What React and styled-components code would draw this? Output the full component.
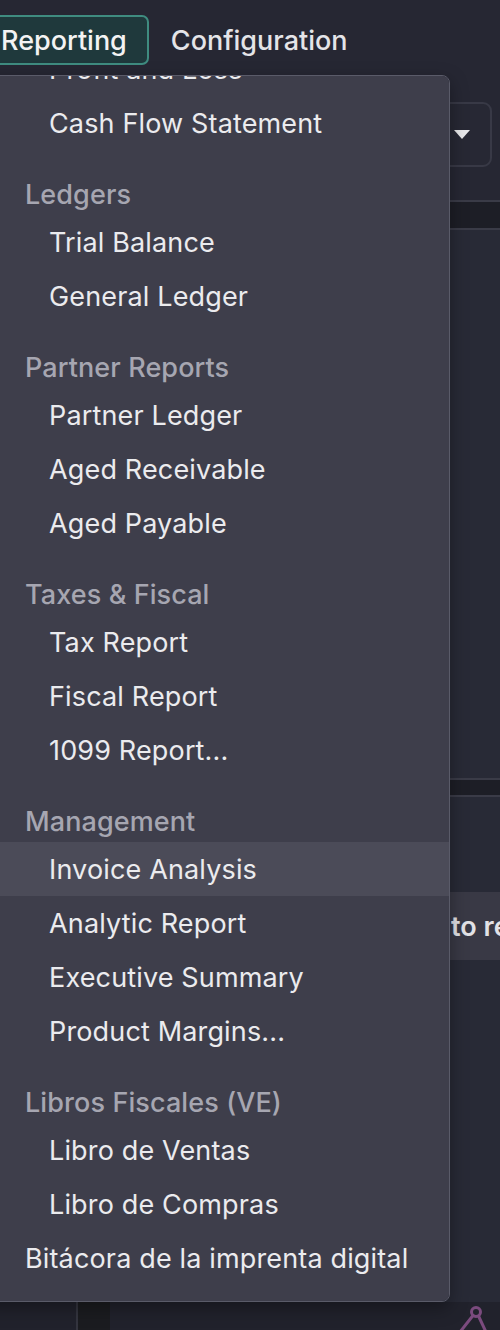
import React, { useLayoutEffect, useRef } from 'react'
import styled, { createGlobalStyle } from 'styled-components'

const GlobalStyle = createGlobalStyle`
  html, body {
    margin: 0;
    padding: 0;
    background: #262733;
    overflow: hidden;
  }
  body {
    font-family: Inter, "Noto Sans", sans-serif;
    -webkit-font-smoothing: antialiased;
  }
`

const Page = styled.div`
  position: relative;
  width: 500px;
  height: 1330px;
  overflow: hidden;
  display: flex;
  flex-direction: column;
`

const TopBar = styled.nav`
  height: 75px;
  flex-shrink: 0;
  display: flex;
  align-items: flex-start;
  gap: 0;
  padding-top: 15px;
  margin-left: -21px;
  box-sizing: border-box;
`

const NavButton = styled.button`
  height: 50px;
  padding: 0 20px;
  border-radius: 7px;
  border: 2px solid ${(p) => (p.active ? '#3f8c80' : 'transparent')};
  background: ${(p) => (p.active ? '#1f393c' : 'transparent')};
  color: ${(p) => (p.active ? '#f3f3f3' : '#e4e4e8')};
  font-family: Inter, sans-serif;
  font-size: 27px;
  font-weight: 500;
  cursor: pointer;
`

const Toolbar = styled.div`
  height: 125px;
  flex-shrink: 0;
  display: flex;
  justify-content: flex-end;
  align-items: flex-start;
  padding: 27px 8px 0 0;
  box-sizing: border-box;
`

const SelectBox = styled.div`
  width: 220px;
  height: 65px;
  border: 2px solid #383946;
  border-radius: 9px;
  background: #272834;
  box-sizing: border-box;
  display: flex;
  align-items: center;
  justify-content: flex-end;
  padding-right: 20px;
`

const Caret = styled.span`
  width: 0;
  height: 0;
  border-left: 8px solid transparent;
  border-right: 8px solid transparent;
  border-top: 9px solid #e8e8ea;
`

const Band = styled.div`
  height: ${(p) => p.h}px;
  flex-shrink: 0;
  background: #1d1e26;
  border-top: 2px solid #3a3b47;
  border-bottom: 2px solid #3a3b47;
  box-sizing: border-box;
`

const Panel = styled.div`
  height: ${(p) => p.h}px;
  flex-shrink: 0;
  background: #282a36;
  display: flex;
  flex-direction: column;
`

const NoticeRow = styled.div`
  margin-top: 95px;
  height: 68px;
  background: #393945;
  display: flex;
  align-items: center;
  padding-left: 451px;
  white-space: nowrap;
  color: #e2e2e6;
  font-size: 27px;
  font-weight: 600;
`

const Footer = styled.div`
  flex: 1;
  background: #21222c;
  display: flex;
  justify-content: space-between;
`

const Strip = styled.div`
  width: 32px;
  margin-left: 76px;
  background: #1b1c20;
  border-left: 2px solid #34353f;
`

const FooterIcon = styled.svg`
  width: 40px;
  height: 28px;
  margin-right: 8px;
`

const Menu = styled.div`
  position: absolute;
  top: 75px;
  left: -20px;
  width: 470px;
  height: 1227px;
  box-sizing: border-box;
  background: #3e3e4b;
  border: 1.5px solid #5a5b69;
  border-radius: 8px;
  box-shadow: 0 6px 18px rgba(0, 0, 0, 0.35);
  overflow-y: auto;
  scrollbar-width: none;
  &::-webkit-scrollbar {
    display: none;
  }
`

const List = styled.div`
  padding: 8px 0 16px;
`

const SectionHeader = styled.div`
  height: 42px;
  margin-top: ${(p) => (p.first ? 0 : 23)}px;
  display: flex;
  align-items: center;
  padding-left: 44px;
  color: #a6a6b1;
  font-size: 27px;
  font-weight: 500;
  letter-spacing: 0.1px;
`

const Item = styled.div`
  height: 54px;
  display: flex;
  align-items: center;
  padding-left: ${(p) => (p.top ? 44 : 68)}px;
  background: ${(p) => (p.hover ? '#4b4b58' : 'transparent')};
  color: #ebebee;
  font-size: 27px;
  font-weight: 400;
  letter-spacing: 0.15px;
  white-space: nowrap;
  cursor: pointer;
`

const sections = [
  { title: 'Statements', items: ['Balance Sheet', 'Profit and Loss', 'Cash Flow Statement'] },
  { title: 'Ledgers', items: ['Trial Balance', 'General Ledger'] },
  { title: 'Partner Reports', items: ['Partner Ledger', 'Aged Receivable', 'Aged Payable'] },
  { title: 'Taxes & Fiscal', items: ['Tax Report', 'Fiscal Report', '1099 Report...'] },
  {
    title: 'Management',
    items: ['Invoice Analysis', 'Analytic Report', 'Executive Summary', 'Product Margins...'],
  },
  { title: 'Libros Fiscales (VE)', items: ['Libro de Ventas', 'Libro de Compras'] },
]

function ReportingMenu() {
  const menuRef = useRef(null)
  const anchorRef = useRef(null)

  // the menu is shown scrolled a little, "Cash Flow Statement" near the top
  useLayoutEffect(() => {
    if (menuRef.current && anchorRef.current) {
      menuRef.current.scrollTop = anchorRef.current.offsetTop - 17
    }
  }, [])

  return (
    <Menu ref={menuRef}>
      <List>
        {sections.map((s, i) => (
          <div key={s.title}>
            <SectionHeader first={i === 0}>{s.title}</SectionHeader>
            {s.items.map((it) => (
              <Item
                key={it}
                hover={it === 'Invoice Analysis'}
                ref={it === 'Cash Flow Statement' ? anchorRef : undefined}
              >
                {it}
              </Item>
            ))}
          </div>
        ))}
        <Item top>Bitácora de la imprenta digital</Item>
      </List>
    </Menu>
  )
}

export default function App() {
  return (
    <Page>
      <GlobalStyle />
      <TopBar>
        <NavButton active>Reporting</NavButton>
        <NavButton>Configuration</NavButton>
      </TopBar>
      <Toolbar>
        <SelectBox>
          <Caret />
        </SelectBox>
      </Toolbar>
      <Band h={30} />
      <Panel h={548} />
      <Band h={19} />
      <Panel h={505}>
        <NoticeRow>to report for this period</NoticeRow>
      </Panel>
      <Footer>
        <Strip />
        <FooterIcon viewBox="0 0 40 28">
          <g stroke="#7b4b7e" strokeWidth="3" fill="none" strokeLinecap="round">
            <circle cx="24" cy="10" r="4.5" />
            <line x1="21" y1="13.5" x2="8" y2="30" />
            <line x1="26.5" y1="14" x2="34" y2="30" />
          </g>
        </FooterIcon>
      </Footer>
      <ReportingMenu />
    </Page>
  )
}
